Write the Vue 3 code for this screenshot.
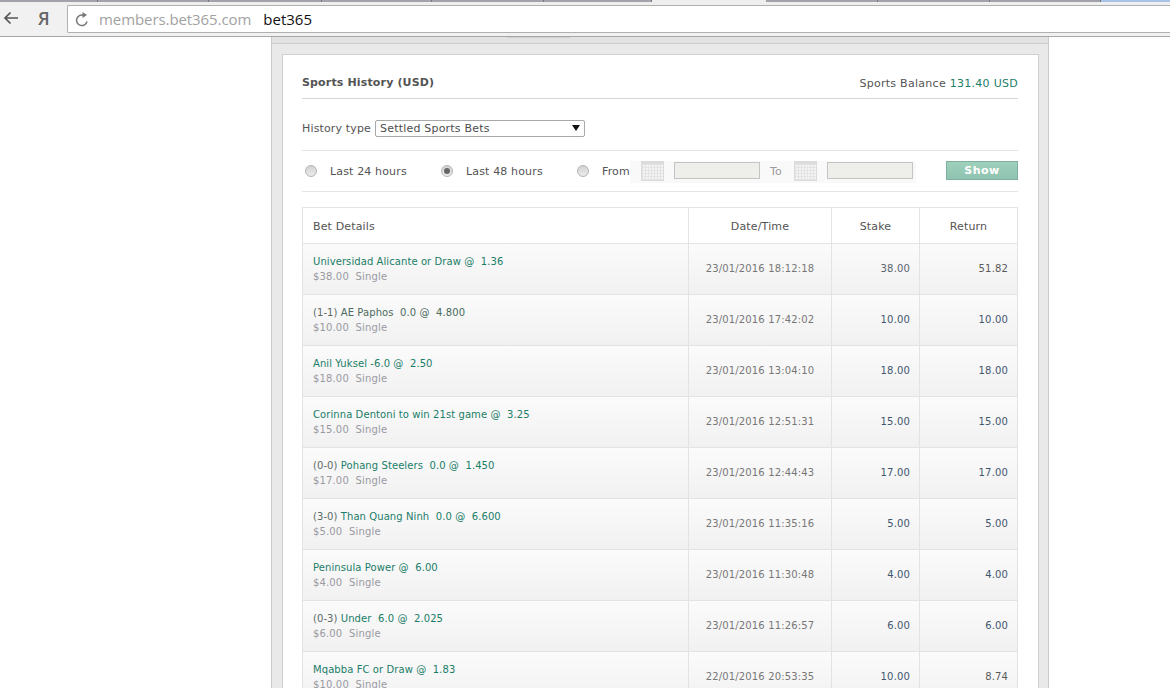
<script setup>
const rows = [
  { score: '', bet: 'Universidad Alicante or Draw @  1.36', sub: '$38.00', date: '23/01/2016 18:12:18', stake: '38.00', ret: '51.82', first: true, win: true },
  { score: '(1-1) ', bet: 'AE Paphos  0.0 @  4.800', sub: '$10.00', date: '23/01/2016 17:42:02', stake: '10.00', ret: '10.00', muted: true },
  { score: '', bet: 'Anil Yuksel -6.0 @  2.50', sub: '$18.00', date: '23/01/2016 13:04:10', stake: '18.00', ret: '18.00' },
  { score: '', bet: 'Corinna Dentoni to win 21st game @  3.25', sub: '$15.00', date: '23/01/2016 12:51:31', stake: '15.00', ret: '15.00' },
  { score: '(0-0) ', bet: 'Pohang Steelers  0.0 @  1.450', sub: '$17.00', date: '23/01/2016 12:44:43', stake: '17.00', ret: '17.00' },
  { score: '(3-0) ', bet: 'Than Quang Ninh  0.0 @  6.600', sub: '$5.00', date: '23/01/2016 11:35:16', stake: '5.00', ret: '5.00' },
  { score: '', bet: 'Peninsula Power @  6.00', sub: '$4.00', date: '23/01/2016 11:30:48', stake: '4.00', ret: '4.00' },
  { score: '(0-3) ', bet: 'Under  6.0 @  2.025', sub: '$6.00', date: '23/01/2016 11:26:57', stake: '6.00', ret: '6.00' },
  { score: '', bet: 'Mqabba FC or Draw @  1.83', sub: '$10.00', date: '22/01/2016 20:53:35', stake: '10.00', ret: '8.74', win: true },
]
const radios = [
  { label: 'Last 24 hours', on: false },
  { label: 'Last 48 hours', on: true },
]
const tabs = [98, 111, 113, 110, 112, 108, 114, 112, 112, 111]
</script>

<template>
  <div class="page">
    <div class="tabs">
      <i v-for="(w, n) in tabs" :key="n" :class="{ gap: n === 6 }" :style="{ width: w + 'px' }"></i>
      <i class="blue"></i>
    </div>
    <div class="toolbar">
      <svg class="back" width="15" height="14" viewBox="0 0 15 14"><path d="M15 7H2M7.500 1.500 2 7l5.500 5.500" fill="none" stroke="#555" stroke-width="1.700"/></svg>
      <span class="ya">Я</span>
      <div class="addr">
        <svg class="reload" width="14" height="15" viewBox="0 0 14 15"><path d="M12 9.500A5.300 5.300 0 1 1 8.500 3.200" fill="none" stroke="#777" stroke-width="1.500"/><path d="M7.500 0v6l4.500-3z" fill="#777"/></svg>
        <span class="host">members.bet365.com</span><span class="site">bet365</span>
      </div>
    </div>
    <div class="outer">
      <div class="notch"><span></span></div>
      <div class="panel">
        <div class="head">
          <h1>Sports History (USD)</h1>
          <div class="bal">Sports Balance <em>131.40 USD</em></div>
        </div>
        <div class="type">
          <label>History type</label>
          <div class="select">Settled Sports Bets<span class="arrow"></span></div>
        </div>
        <div class="filter">
          <div v-for="r in radios" :key="r.label" class="radio-item">
            <span class="radio" :class="{ on: r.on }"></span><span>{{ r.label }}</span>
          </div>
          <div class="range">
            <span class="radio"></span><span class="from">From</span>
            <div class="dates">
              <span class="cal"></span><span class="inp"></span>
              <span class="to">To</span>
              <span class="cal"></span><span class="inp last"></span>
            </div>
          </div>
          <button class="show">Show</button>
        </div>
        <div class="table">
          <div class="row hdr">
            <div class="c details">Bet Details</div>
            <div class="c date">Date/Time</div>
            <div class="c stake">Stake</div>
            <div class="c ret">Return</div>
          </div>
          <div v-for="r in rows" :key="r.date" class="row item">
            <div class="c details">
              <div class="bet" :class="{ muted: r.muted }"><span class="score">{{ r.score }}</span>{{ r.bet }}</div>
              <div class="sub">{{ r.sub }}&nbsp;&nbsp;Single</div>
            </div>
            <div class="c date">{{ r.date }}</div>
            <div class="c stake num" :class="{ plain: r.first }">{{ r.stake }}</div>
            <div class="c ret num" :class="{ plain: r.win }">{{ r.ret }}</div>
          </div>
        </div>
      </div>
    </div>
  </div>
</template>

<style>
html, body { margin: 0; background: #fff; overflow: hidden; }
</style>

<style scoped>
.page { width: 1170px; height: 688px; overflow: hidden; font-family: "DejaVu Sans", Verdana, sans-serif; font-size: 11px; color: #545454; letter-spacing: .15px; }
.tabs { height: 5px; background: #efefef; display: flex; }
.tabs i { height: 2px; background: #a2a2ac; border-right: 1px solid #777; box-sizing: border-box; }
.tabs i.gap { background: transparent; border-right: 0; }
.tabs i.blue { flex: 1; background: #a9c4e6; border-right: 0; }
.toolbar { height: 32px; box-sizing: border-box; background: #f1f1f1; border-bottom: 1px solid #a6a6a6; display: flex; align-items: flex-start; }
.back { margin: 6px 0 0 3px; }
.ya { margin: 0 0 0 20px; width: 29px; font: 600 18px/26px "Open Sans", sans-serif; color: #666; letter-spacing: 0; }
.addr { flex: 1; height: 28px; box-sizing: border-box; background: #fff; border: 1px solid #b0b0b0; border-right: 0; border-radius: 2px 0 0 2px; display: flex; align-items: center; font: 15px "Open Sans", sans-serif; letter-spacing: 0; }
.reload { margin-left: 7px; }
.host { margin-left: 10px; color: #a2a2a2; letter-spacing: -.08px; }
.site { margin-left: 12px; color: #111; }
.outer { width: 778px; margin-left: 271px; height: 651px; box-sizing: border-box; background: #e9e9e9; border-left: 1px solid #cacaca; border-right: 1px solid #cacaca; }
.notch { height: 7px; box-sizing: border-box; background: #e2e2e2; border-bottom: 1px solid #cdcdcd; position: relative; }
.notch span { position: absolute; left: 235px; top: 0; width: 63px; height: 1px; background: #d0d0d0; }
.panel { margin: 10px 0 0 10px; width: 757px; height: 640px; box-sizing: border-box; background: #fff; border: 1px solid #cfcfcf; border-bottom: 0; padding: 0 20px 0 19px; }
.head { height: 44px; box-sizing: border-box; display: flex; justify-content: space-between; align-items: flex-end; padding-bottom: 7px; border-bottom: 1px solid #d5d5d5; line-height: 14px; }
h1 { margin: 0 0 1px; font-size: 11px; font-weight: 700; color: #545454; letter-spacing: .15px; }
.bal { letter-spacing: .28px; }
.bal em { font-style: normal; color: #1c8069; }
.type { height: 52px; display: flex; align-items: center; gap: 4px; border-bottom: 1px solid #e3e3e3; box-sizing: border-box; padding-top: 7px; }
.select { width: 210px; height: 17px; box-sizing: border-box; border: 1px solid #a9a9a9; border-radius: 2px; padding-left: 4px; line-height: 15px; position: relative; color: #4d4d4d; letter-spacing: .2px; }
.arrow { position: absolute; right: 4px; top: 4px; border: 4px solid transparent; border-top: 6px solid #111; border-bottom: 0; }
.filter { height: 41px; display: flex; align-items: center; border-bottom: 1px solid #e3e3e3; box-sizing: border-box; position: relative; }
.radio-item { display: flex; align-items: center; width: 136px; padding-left: 3px; box-sizing: border-box; }
.radio { width: 12px; height: 12px; flex: none; border-radius: 50%; box-sizing: border-box; background: linear-gradient(#d2d2d2, #ececec); border: 1px solid #b5b5b5; margin-right: 13px; position: relative; }
.radio.on::after { content: ""; position: absolute; left: 2px; top: 2px; width: 6px; height: 6px; border-radius: 50%; background: #666; }
.range { display: flex; align-items: center; padding-left: 3px; }
.from { width: 28px; }
.dates { display: flex; align-items: flex-start; width: 286px; height: 22px; margin-top: 2px; padding-left: 11px; background: #f9f9f9; box-sizing: border-box; }
.cal { width: 23px; height: 20px; flex: none; box-sizing: border-box; background-color: #f4f4f4; background-image: linear-gradient(#e3e3e3 1px, transparent 1px), linear-gradient(90deg, #e3e3e3 1px, transparent 1px); background-size: 3px 3px; border: 1px solid #dcdcdc; border-top-width: 3px; }
.inp { width: 86px; height: 17px; flex: none; margin: 1px 0 0 10px; box-sizing: border-box; background: #eeeeea; border: 1px solid #c4c4c4; }
.to { margin: 4px 10px 0 10px; color: #999; width: 14px; }
.show { position: absolute; right: 0; top: 10px; width: 72px; height: 19px; padding: 0; border: 1px solid #7fb09f; background: linear-gradient(#9ed0bc, #90c3af); color: #fff; font: 700 11px "DejaVu Sans", sans-serif; letter-spacing: .5px; }
.table { margin-top: 15px; width: 716px; border: 1px solid #e3e3e3; border-bottom: 0; box-sizing: border-box; }
.row { display: flex; }
.c { box-sizing: border-box; border-right: 1px solid #e3e3e3; }
.c:last-child { border-right: 0; }
.details { width: 386px; padding-left: 10px; }
.date { width: 143px; text-align: center; }
.stake { width: 88px; }
.ret { flex: 1; }
.hdr { height: 36px; line-height: 37px; border-bottom: 1px solid #e3e3e3; box-sizing: border-box; }
.hdr .stake, .hdr .ret { text-align: center; }
.item { height: 51px; border-bottom: 1px solid #e3e3e3; box-sizing: border-box; background: linear-gradient(#fbfbfb, #f1f1f1); }
.item .date, .num { line-height: 50px; font-size: 10px; }
.item .date { color: #777; }
.num { text-align: right; padding-right: 9px; color: #3f5670; }
.num.plain { color: #5a5a5a; }
.stake.plain { color: #5a6470; }
.bet { margin-top: 11px; line-height: 14px; font-size: 10px; letter-spacing: .08px; color: #1a7d68; white-space: pre; }
.bet.muted { color: #4b6a60; }
.score { color: #5c6b67; }
.sub { margin-top: 1px; line-height: 14px; font-size: 10px; color: #9a9aa2; }
</style>
